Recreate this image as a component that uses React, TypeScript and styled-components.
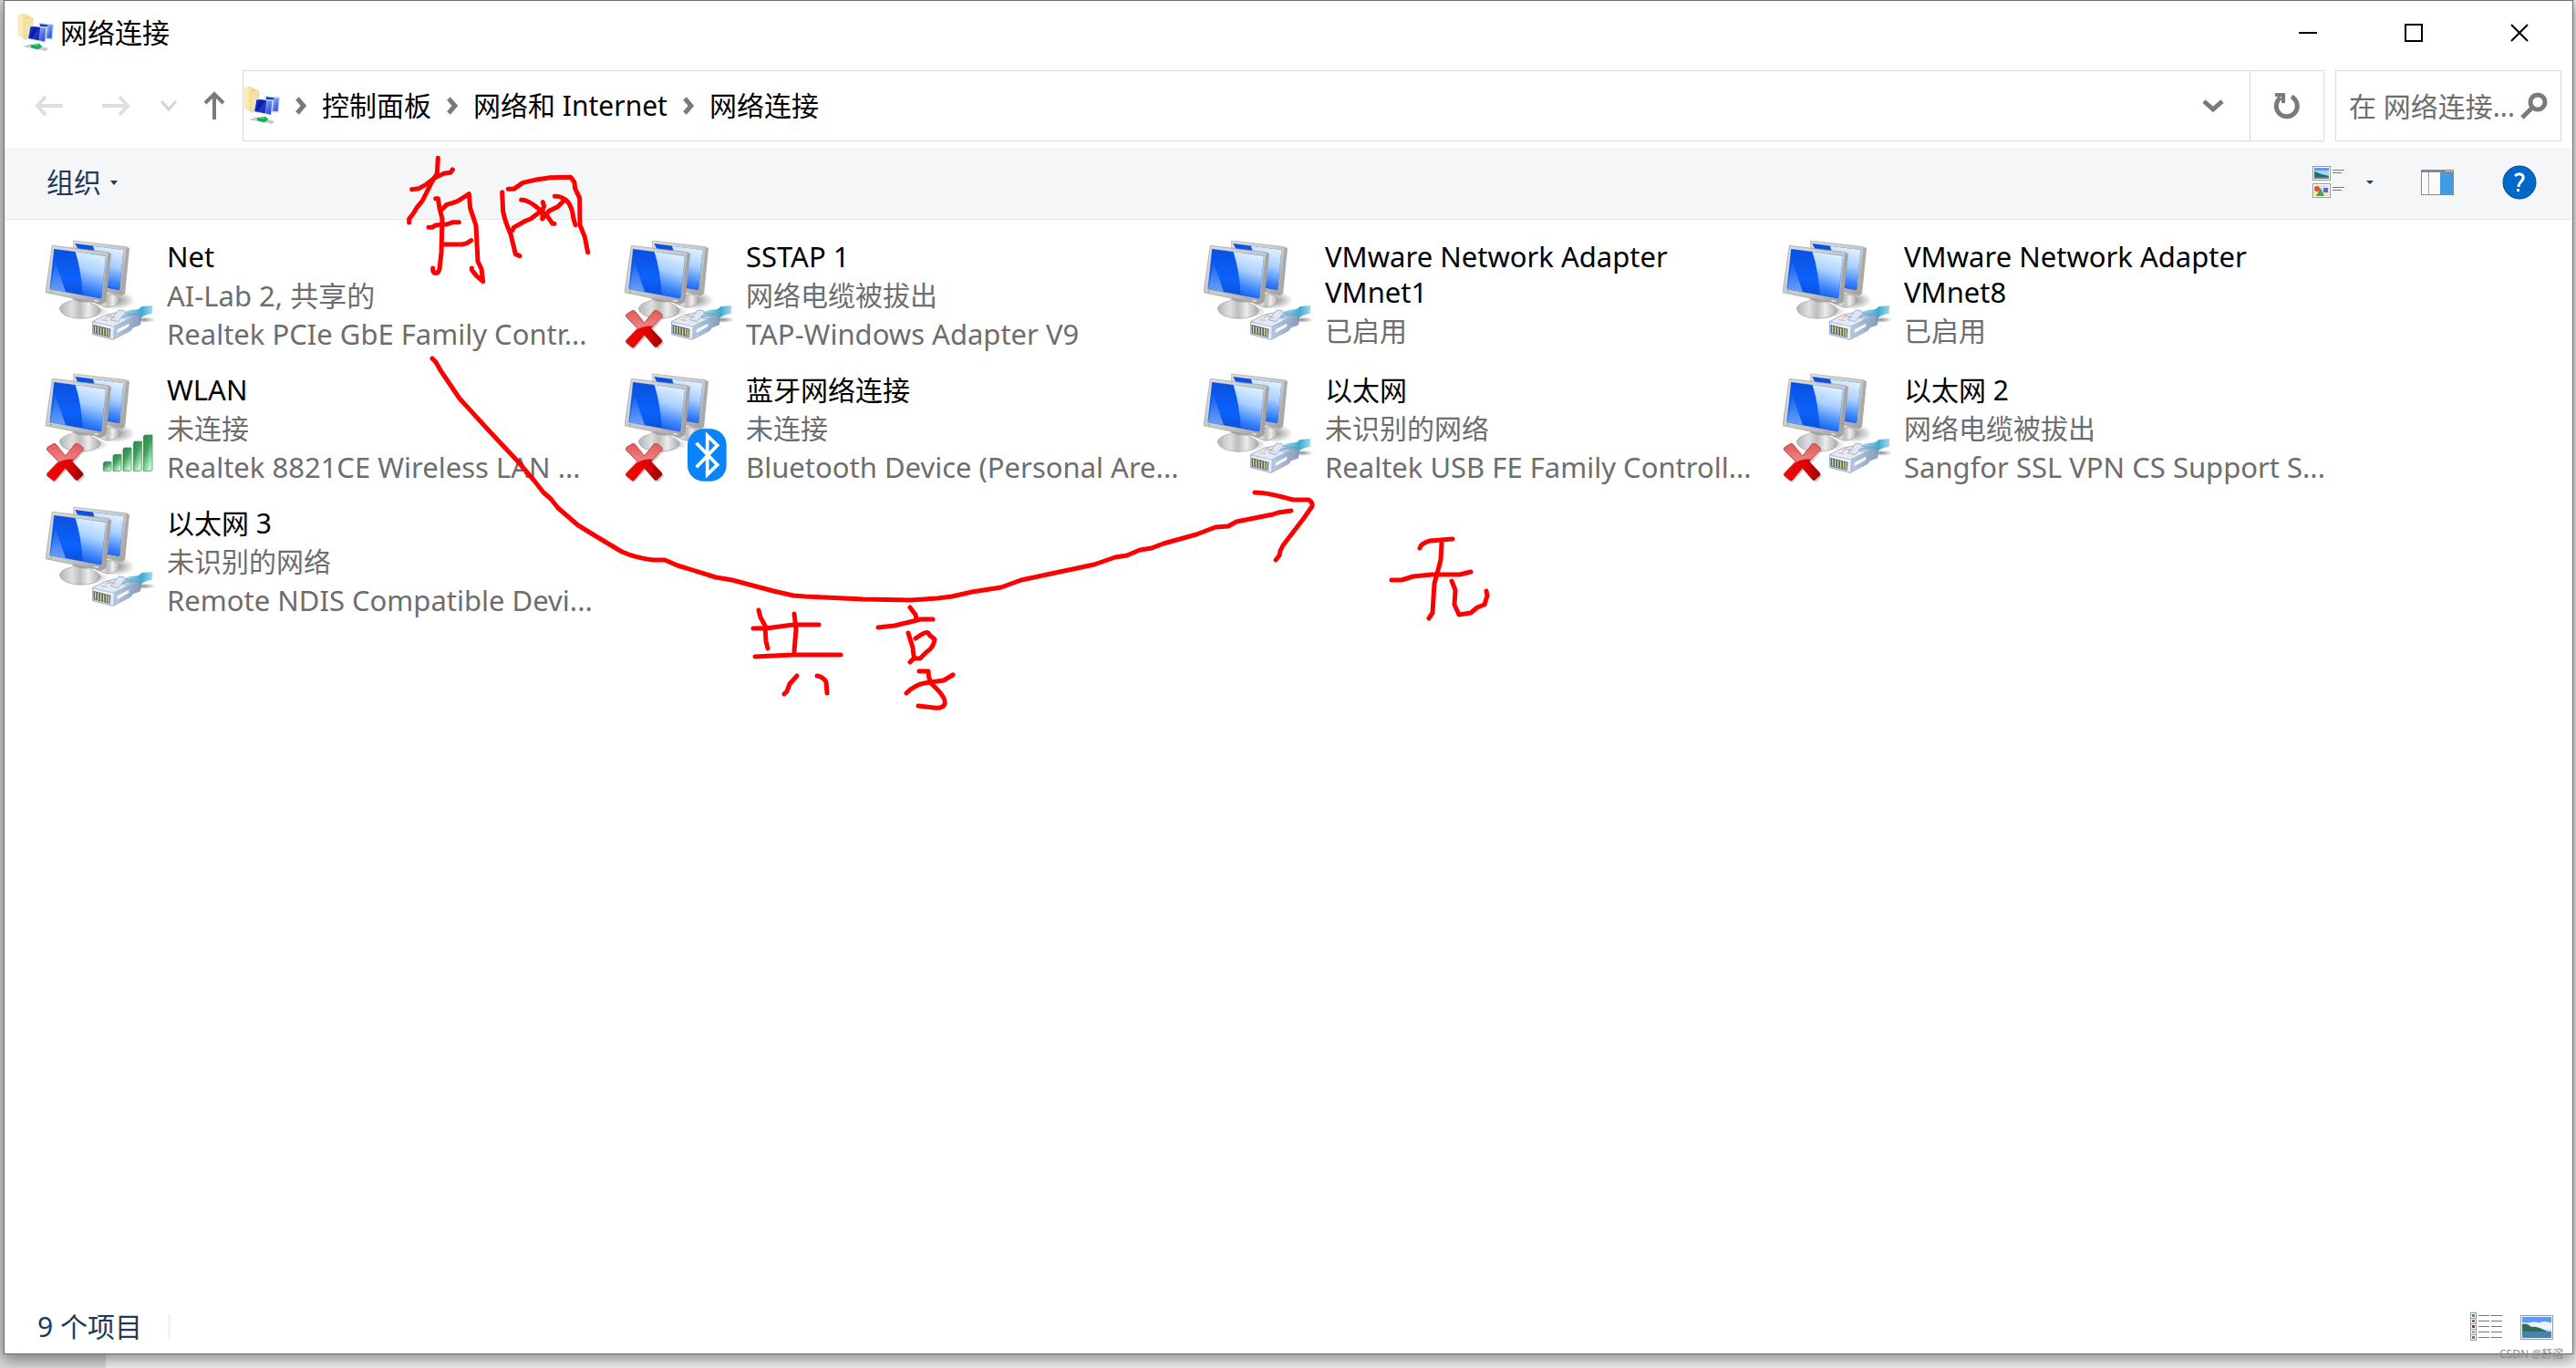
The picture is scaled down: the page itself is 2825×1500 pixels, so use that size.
import React from 'react';
import styled, { createGlobalStyle } from 'styled-components';

const GlobalStyle = createGlobalStyle`
  * { box-sizing: border-box; }
  body {
    margin: 0;
    background: linear-gradient(90deg, #dcdcdc 116px, #f7f7f7 116px);
    font-family: "Noto Sans", "Noto Sans CJK SC", sans-serif;
    font-size: 30px;
    color: #000;
  }
  button, input { font: inherit; color: inherit; border: 0; background: none; padding: 0; margin: 0; }
  h1, h2, p, ul, ol { margin: 0; padding: 0; font-size: inherit; font-weight: 400; list-style: none; }
  svg { display: block; flex: none; }
`;

const Desktop = styled.div`
  position: relative;
  min-height: 100vh;
  padding: 0 3px 15px 4px;
  display: flex;
  overflow: hidden;
`;

const Window = styled.main`
  flex: 1;
  min-width: 0;
  display: flex;
  flex-direction: column;
  background: #fff;
  border: 1px solid #6e6e6e;
  box-shadow: 0 4px 16px 2px rgba(0, 0, 0, 0.45);
`;

const TitleBar = styled.header`
  display: flex;
  align-items: center;
  height: 70px;
  padding-left: 14px;
  gap: 7px;
`;

const Title = styled.h1`
  flex: 1;
  line-height: 40px;
`;

const CaptionButtons = styled.div`
  display: flex;
`;

const CaptionButton = styled.button`
  width: 116px;
  height: 70px;
  display: grid;
  place-items: center;
`;

const AddressRow = styled.div`
  display: flex;
  align-items: center;
  height: 91px;
  padding: 0 12px 1px 0;
`;

const NavButtons = styled.div`
  display: flex;
  width: 261px;
  padding-left: 12px;
`;

const NavButton = styled.button<{ $width: number }>`
  width: ${(p) => p.$width}px;
  height: 40px;
  display: grid;
  place-items: center;
`;

const AddressBox = styled.div`
  flex: 1;
  display: flex;
  height: 78px;
  margin-right: 12px;
  border: 1px solid #d9d9d9;
`;

const Crumbs = styled.nav`
  flex: 1;
  display: flex;
  align-items: center;
  gap: 17px;
`;

const Crumb = styled.a`
  color: inherit;
  text-decoration: none;
  line-height: 40px;
  white-space: nowrap;
`;

const BoxButton = styled.button<{ $divided?: boolean }>`
  width: 81px;
  display: grid;
  place-items: center;
  border-left: ${(p) => (p.$divided ? '1px solid #d9d9d9' : '0')};
`;

const SearchBox = styled.label`
  display: flex;
  align-items: center;
  width: 248px;
  height: 78px;
  padding: 0 14px;
  border: 1px solid #d9d9d9;
`;

const SearchInput = styled.input`
  flex: 1;
  min-width: 0;
  height: 44px;
  outline: 0;
  &::placeholder { color: #6d6d6d; opacity: 1; }
`;

const Toolbar = styled.div`
  display: flex;
  align-items: center;
  height: 79px;
  padding: 0 39px 2px 46px;
  background: #f4f6f8;
  border-bottom: 1px solid #e6e7e8;
  color: #1e395b;
`;

const OrganizeButton = styled.button`
  display: flex;
  align-items: center;
  gap: 10px;
  line-height: 40px;
  margin-right: auto;
`;

const ToolButton = styled.button<{ $gap: number }>`
  display: grid;
  place-items: center;
  margin-left: ${(p) => p.$gap}px;
`;

const Adapters = styled.ul`
  flex: 1;
  display: grid;
  grid-template-columns: repeat(auto-fill, 635px);
  grid-auto-rows: 146px;
  align-content: start;
  padding: 19px 0 0 45px;
`;

const Adapter = styled.li`
  display: flex;
  gap: 13px;
`;

const AdapterText = styled.div`
  flex: 1;
  min-width: 0;
  padding-top: 2px;
`;

const AdapterName = styled.h2<{ $latin: boolean }>`
  font-size: ${(p) => (p.$latin ? 31 : 30)}px;
  line-height: 39px;
  max-width: 440px;
  margin-bottom: 2px;
`;

const AdapterDetail = styled.p<{ $latin: boolean }>`
  font-size: ${(p) => (p.$latin ? 31 : 30)}px;
  line-height: 42px;
  color: #6d6d6d;
  white-space: nowrap;
`;

const StatusBar = styled.footer`
  display: flex;
  align-items: center;
  height: 58px;
  padding: 0 21px 0 36px;
  color: #1e395b;
`;

const ItemCount = styled.span`
  line-height: 40px;
  padding-right: 28px;
`;

const Divider = styled.span`
  width: 3px;
  height: 28px;
  background: #f3f3f3;
  margin-right: auto;
`;

const InkLayer = styled.svg`
  position: absolute;
  top: 0;
  left: 0;
  pointer-events: none;
`;

const Watermark = styled.span`
  position: absolute;
  right: 14px;
  bottom: 7px;
  font-size: 12px;
  line-height: 16px;
  color: #8c8c8c;
`;

const SharedDefs = styled.svg`
  position: absolute;
`;

const FolderNetIcon = () => (
  <svg width="40" height="42" viewBox="12 14 120 126" aria-hidden="true">
    <path d="M16 20 L34 14 L62 30 L62 90 L40 99 L16 82Z" fill="url(#fold)" stroke="#dcc47c" strokeWidth="1.5" />
    <path d="M34 30 L62 26 L62 92 L36 98Z" fill="#f4e2a0" stroke="#e0c878" />
    <path d="M84 46 L130 50 L126 98 L90 94Z" fill="url(#mini)" stroke="#cdd6e6" strokeWidth="4" />
    <path d="M54 54 L108 59 L104 108 L46 96Z" fill="url(#mini)" stroke="#dfe5ee" strokeWidth="4" />
    <path d="M66 57 L88 59 L82 102 L50 95Z" fill="#0713a0" opacity="0.75" />
    <path d="M34 122 L52 115 L112 128 L106 136 L88 132Z" fill="#c3ccd0" stroke="#97a4a8" />
    <path d="M56 117 L84 112 L94 122 L80 132 L58 126Z" fill="#0eb052" />
    <path d="M60 118 L80 115 L84 120Z" fill="#5be294" />
  </svg>
);

const Chevron = () => (
  <svg width="12" height="22" viewBox="0 0 12 22" aria-hidden="true">
    <path d="M2 3 L9 11 L2 19" fill="none" stroke="#7a7a7a" strokeWidth="5" />
  </svg>
);

const Caret = ({ small }: { small?: boolean }) => (
  <svg width="8" height="5" viewBox="0 0 8 5" aria-hidden="true">
    <path d={small ? 'M0 0H8L4 5Z' : 'M0 0H8L4 4Z'} fill="#1e395b" />
  </svg>
);

type Status = 'cable' | 'wifi' | 'bluetooth';

const Gradients = () => (
  <SharedDefs width="0" height="0" aria-hidden="true">
    <defs>
      <linearGradient id="fold" x1="0" x2="1">
        <stop offset="0" stopColor="#fdf3c4" />
        <stop offset="1" stopColor="#e9cd72" />
      </linearGradient>
      <linearGradient id="mini" x1="0" x2="1" y2="0.6">
        <stop offset="0" stopColor="#0a1fa0" />
        <stop offset="0.45" stopColor="#1a3ee0" />
        <stop offset="0.55" stopColor="#86aaf8" />
        <stop offset="1" stopColor="#2c50dc" />
      </linearGradient>
      <linearGradient id="bezel" x1="0" y1="0" x2="1" y2="1">
        <stop offset="0" stopColor="#dedede" />
        <stop offset="0.6" stopColor="#c4c4c4" />
        <stop offset="1" stopColor="#9a9a9a" />
      </linearGradient>
      <linearGradient id="glass" x1="0" y1="0" x2="0" y2="1">
        <stop offset="0" stopColor="#0a50de" />
        <stop offset="0.6" stopColor="#0c62fb" />
        <stop offset="1" stopColor="#0a4cd2" />
      </linearGradient>
      <linearGradient id="sheen" x1="0.5" y1="0" x2="0.3" y2="1">
        <stop offset="0" stopColor="#e2f2ff" />
        <stop offset="0.4" stopColor="#a9d0ff" />
        <stop offset="0.75" stopColor="#3f86fb" />
        <stop offset="1" stopColor="#0a57ee" />
      </linearGradient>
      <linearGradient id="streak" x1="0" y1="0" x2="0" y2="1">
        <stop offset="0" stopColor="#1460ee" />
        <stop offset="1" stopColor="#8ab8fb" />
      </linearGradient>
      <linearGradient id="base" x1="0" x2="1">
        <stop offset="0" stopColor="#b4b4b4" />
        <stop offset="0.3" stopColor="#e0e0e0" />
        <stop offset="0.5" stopColor="#bdbdbd" />
        <stop offset="0.7" stopColor="#ededed" />
        <stop offset="1" stopColor="#a8a8a8" />
      </linearGradient>
      <radialGradient id="shade">
        <stop offset="0" stopColor="#000" stopOpacity="0.45" />
        <stop offset="1" stopColor="#000" stopOpacity="0" />
      </radialGradient>
      <linearGradient id="redTop" x1="0" y1="0" x2="0" y2="1">
        <stop offset="0" stopColor="#e05a5a" />
        <stop offset="1" stopColor="#f28a8a" />
      </linearGradient>
      <linearGradient id="redLow" x1="0" x2="1">
        <stop offset="0" stopColor="#f00808" />
        <stop offset="0.55" stopColor="#e60000" />
        <stop offset="1" stopColor="#930404" />
      </linearGradient>
      <linearGradient id="bar" x1="0" y1="0" x2="0.6" y2="1">
        <stop offset="0" stopColor="#2c8a4c" />
        <stop offset="0.45" stopColor="#3f9c5c" />
        <stop offset="1" stopColor="#c4fbd0" />
      </linearGradient>
      <linearGradient id="cord" x1="0" x2="1">
        <stop offset="0" stopColor="#a6dff0" />
        <stop offset="0.6" stopColor="#3fa9cf" />
        <stop offset="1" stopColor="#9fdcef" />
      </linearGradient>
      <linearGradient id="jack" x1="0" x2="1">
        <stop offset="0" stopColor="#c4d2e6" />
        <stop offset="0.5" stopColor="#eef4fb" />
        <stop offset="1" stopColor="#7f93b4" />
      </linearGradient>
    </defs>
  </SharedDefs>
);

const CablePlug = () => (
  <g>
    <ellipse cx="352" cy="290" rx="40" ry="10" fill="url(#shade)" />
    <path d="M290 264 C320 252 336 262 346 246 L382 243 L380 270 C360 270 350 282 325 290Z" fill="url(#cord)" />
    <path d="M185 296 L228 274 L276 264 L336 274 L343 282 L341 306 L316 315 L310 325 L252 355 L185 338Z" fill="url(#jack)" stroke="#6d84a8" strokeWidth="2" />
    <path d="M185 296 L228 274 L302 288 L254 312Z" fill="#e2ebf6" stroke="#a2b2ca" strokeWidth="2" />
    <path d="M254 312 L302 288 L338 278 L340 305 L316 313 L310 323 L252 353Z" fill="#8ea4c8" opacity="0.6" />
    <path d="M266 322 L304 302 L304 312 L266 334Z" fill="#f4f8fd" />
    <path d="M244 290 L270 258 L288 260 L293 268 L268 296Z" fill="#dde6f2" stroke="#8095b6" strokeWidth="2" />
    <path d="M226 284 L240 278 L260 283 M214 290 L234 292" stroke="#e7a58c" strokeWidth="3" fill="none" />
    <path d="M282 282 L300 274 L322 278" stroke="#6fb8dc" strokeWidth="5" fill="none" />
    <path d="M188 306 L244 320 L242 348 L188 334Z" fill="#52627c" />
    <path d="M194 310V333 M203 312V336 M212 314V338 M221 317V341 M230 319V343 M238 321V345" stroke="#e2dc74" strokeWidth="4" />
    <path d="M186 302 L252 318" stroke="#f5f9ff" strokeWidth="4" />
  </g>
);

const SignalBars = () => (
  <g fill="url(#bar)" stroke="#2c7a48" strokeWidth="2">
    {[[220, 319, 26], [252, 295, 27], [285, 273, 27], [319, 252, 27], [352, 231, 29]].map(([x, y, w]) => (
      <path key={x} d={`M${x} ${y + 4} L${x + 5} ${y} H${x + w} V346 L${x + w - 4} 349 H${x}Z`} />
    ))}
  </g>
);

const BluetoothMark = () => (
  <g transform="translate(-17 9)">
    <rect x="254" y="202" width="128" height="172" rx="52" fill="#0a84fb" />
    <path d="M283 248 L352 320 L319 352 V224 L352 256 L283 328" fill="none" stroke="#fff" strokeWidth="11" />
  </g>
);

const RedCross = () => (
  <g>
    <path d="M58 262 L97 306 L133 260 L156 278 L119 320 L156 362 L136 384 L97 342 L56 384 L35 364 L74 320 L34 280Z" fill="#777" opacity="0.35" transform="translate(4 4)" />
    <path d="M56 260 Q62 258 66 264 L95 300 L126 262 Q132 256 138 261 L152 271 Q156 276 151 281 L117 318 L151 354 Q156 360 151 365 L136 379 Q131 382 127 377 L95 340 L62 379 Q57 384 52 379 L36 366 Q32 361 36 356 L73 318 L36 281 Q32 276 37 271Z" fill="url(#redLow)" stroke="#b82020" strokeWidth="2" />
    <path d="M56 260 Q62 258 66 264 L95 300 L126 262 Q132 256 138 261 L152 271 Q156 276 151 281 L123 311 Q90 308 65 326 L73 318 L36 281 Q32 276 37 271Z" fill="url(#redTop)" stroke="#d04848" strokeWidth="2" />
  </g>
);

const AdapterIcon = ({ status, off }: { status: Status; off?: boolean }) => (
  <svg width="120" height="130" viewBox="30 18 360 390" aria-hidden="true">
    <ellipse cx="262" cy="226" rx="62" ry="30" fill="url(#shade)" />
    <path d="M196 236 Q206 214 236 206 Q270 206 274 222 Q270 246 232 250Z" fill="url(#base)" stroke="#a0a0a0" strokeWidth="2" />
    <path d="M122 30 L296 50 L305 55 L290 204 L280 210 L220 196 L122 190Z" fill="url(#bezel)" stroke="#a4a4a4" strokeWidth="2" />
    <path d="M296 52 L304 56 L290 204 L280 209Z" fill="#a9a9a9" />
    <path d="M127 39 L286 60 L273 192 L200 180Z" fill="url(#glass)" />
    <path d="M186 47 L286 60 L273 192 L228 183Z" fill="url(#sheen)" />
    <ellipse cx="165" cy="262" rx="72" ry="22" fill="url(#shade)" />
    <path d="M76 252 Q82 234 116 228 L128 214 L176 220 L180 236 Q206 244 211 258 Q206 284 144 286 Q80 282 76 252Z" fill="url(#base)" stroke="#9c9c9c" strokeWidth="2" />
    <path d="M120 222 Q146 238 182 230 L178 222 L128 212Z" fill="#8e8e8e" opacity="0.6" />
    <path d="M52 46 L236 68 L245 73 L228 230 L214 238 L30 200Z" fill="url(#bezel)" stroke="#999" strokeWidth="2" />
    <path d="M236 70 L244 74 L227 229 L214 237Z" fill="#a3a3a3" />
    <path d="M57 56 L229 79 L214 221 L43 190Z" fill="url(#glass)" stroke="#dbe8f6" strokeWidth="1" />
    <path d="M128 66 L228 80 L213 220 L152 208 Q148 130 128 66Z" fill="url(#sheen)" />
    <path d="M62 98 L96 198 L45 189Z" fill="url(#streak)" opacity="0.75" />
    <circle cx="48" cy="197" r="3" fill="#58e03c" />
    <path d="M190 226 L204 229" stroke="#eee" strokeWidth="4" />
    {status === 'cable' && <CablePlug />}
    {status === 'wifi' && <SignalBars />}
    {status === 'bluetooth' && <BluetoothMark />}
    {off && <RedCross />}
  </svg>
);

const adapters: { name: string; details: string[]; status: Status; off?: boolean }[] = [
  { name: 'Net', details: ['AI-Lab 2, 共享的', 'Realtek PCIe GbE Family Contr...'], status: 'cable' },
  { name: 'SSTAP 1', details: ['网络电缆被拔出', 'TAP-Windows Adapter V9'], status: 'cable', off: true },
  { name: 'VMware Network Adapter VMnet1', details: ['已启用'], status: 'cable' },
  { name: 'VMware Network Adapter VMnet8', details: ['已启用'], status: 'cable' },
  { name: 'WLAN', details: ['未连接', 'Realtek 8821CE Wireless LAN ...'], status: 'wifi', off: true },
  { name: '蓝牙网络连接', details: ['未连接', 'Bluetooth Device (Personal Are...'], status: 'bluetooth', off: true },
  { name: '以太网', details: ['未识别的网络', 'Realtek USB FE Family Controll...'], status: 'cable' },
  { name: '以太网 2', details: ['网络电缆被拔出', 'Sangfor SSL VPN CS Support S...'], status: 'cable', off: true },
  { name: '以太网 3', details: ['未识别的网络', 'Remote NDIS Compatible Devi...'], status: 'cable' },
];

const isLatin = (text: string) => /[A-Za-z]/.test(text);

const Ink = () => (
  <InkLayer width="1700" height="800" viewBox="0 0 1700 800" fill="none" stroke="#fe0000" strokeWidth="5" strokeLinecap="round" strokeLinejoin="round" aria-hidden="true">
    <g transform="translate(400 160) scale(.33333)" strokeWidth="15">
      <path d="M241 40 L238 90 L220 120 L190 180 L172 202 L160 222 L146 240 V252" />
      <path d="M155 143 L178 140 L200 128 L230 105 L262 90 L282 88 L289 78" />
      <path d="M233 173 H241 L246 205 L255 240 L252 350 L246 405 Q242 420 230 418 Q223 414 224 402" />
      <path d="M255 208 L270 193 L290 187 L305 182 L343 158 L347 205 L366 262 L372 380 L384 405 L389 446 L368 428 L352 408 V402" />
      <path d="M210 268 H222 L232 261 L270 258 L290 251 H310" />
      <path d="M262 324 H322 L336 320 L350 311" />
      <path d="M452 152 L455 215 Q462 250 480 290 L496 356 L510 362" />
      <path d="M472 142 H490 L520 121 L560 112 L610 104 L678 103 L690 120 L692 140 L707 172 L708 260 L724 300 L734 350" />
      <path d="M515 178 Q535 176 570 205 L600 230 L618 256 H624" />
      <path d="M486 278 L490 268 L530 246 L546 240 L585 210 L590 198 L586 185 M585 210 V238" />
      <path d="M625 166 Q648 164 668 184 Q684 206 686 236 L693 260 M655 180 L635 200 L606 214 L584 240" />
    </g>
    <path d="M474 393 L478 397 L483 406 L504 437 L536 472 L567 505 L585 526 L596 540 L604 547 L612 557 L634 576 Q660 592 682 605 Q698 612 716 614 H729 L743 620 L785 633 L803 636 L848 648 L870 653 L883 654 L946 657 L999 658 L1028 656 L1044 654 L1066 649 L1098 644 L1120 636 L1200 619 L1223 611 L1236 609 L1250 603 L1263 601 L1276 596 L1312 586 L1333 578 L1347 577 L1356 572 L1396 564 L1402 562 L1416 560" />
    <path d="M1376 540 Q1390 540 1418 548 H1435 Q1440 551 1439 555 L1430 568 L1407 598 L1404 604 L1403 609 L1399 614" />
    <path d="M1557 601 Q1558 596 1568 593 L1593 591 M1581 596 L1580 614 L1573 640 L1571 672 L1567 678" />
    <path d="M1526 636 H1537 L1550 632 L1570 630 H1601 L1613 627 M1592 637 L1596 647 L1595 663 L1600 674 L1613 672 L1620 666 L1628 663 L1631 653 L1630 648" />
    <path d="M832 669 L834 677 L839 686 L840 703 L842 711 M871 673 L873 690 L871 714 M826 689 H840 L870 685 H898 M828 720 L870 718 H922 M874 741 L866 750 L863 758 L860 761 M896 741 Q903 742 906 748 L907 760" />
    <path d="M998 666 L1004 674 L1005 679 M963 688 L981 686 L1002 681 L1010 679 H1023 M996 694 L1001 710 L1002 719 M1004 700 L1010 696 Q1018 691 1019 696 L1025 701 Q1024 710 1016 715 L1009 722 H1002 L998 726" />
    <path d="M1008 736 H1018 Q1018 748 1026 754 Q1038 766 1036 772 Q1034 777 1024 776 L1007 774 M994 760 Q1003 751 1014 749 L1035 746 L1045 740" />
  </InkLayer>
);

export default function App() {
  return (
    <Desktop>
      <GlobalStyle />
      <Gradients />
      <Window>
        <TitleBar>
          <FolderNetIcon />
          <Title>网络连接</Title>
          <CaptionButtons>
            <CaptionButton aria-label="最小化">
              <svg width="20" height="20" viewBox="0 0 20 20"><path d="M0 10H20" stroke="#000" strokeWidth="2" /></svg>
            </CaptionButton>
            <CaptionButton aria-label="最大化">
              <svg width="20" height="20" viewBox="0 0 20 20"><rect x="1" y="1" width="18" height="18" fill="none" stroke="#000" strokeWidth="2" /></svg>
            </CaptionButton>
            <CaptionButton aria-label="关闭">
              <svg width="20" height="20" viewBox="0 0 20 20"><path d="M1 1L19 19M19 1L1 19" stroke="#000" strokeWidth="2" /></svg>
            </CaptionButton>
          </CaptionButtons>
        </TitleBar>

        <AddressRow>
          <NavButtons>
            <NavButton $width={73} aria-label="后退">
              <svg width="32" height="24" viewBox="0 0 32 24"><path d="M12 2L3 12L12 22M3 12H31" fill="none" stroke="#dedede" strokeWidth="4" /></svg>
            </NavButton>
            <NavButton $width={73} aria-label="前进">
              <svg width="32" height="24" viewBox="0 0 32 24"><path d="M20 2L29 12L20 22M29 12H1" fill="none" stroke="#dedede" strokeWidth="4" /></svg>
            </NavButton>
            <NavButton $width={43} aria-label="最近浏览的位置">
              <svg width="20" height="14" viewBox="0 0 20 14"><path d="M2 2L10 11L18 2" fill="none" stroke="#d4d4d4" strokeWidth="3" /></svg>
            </NavButton>
            <NavButton $width={58} aria-label="上移">
              <svg width="24" height="32" viewBox="0 0 24 32"><path d="M2 13L12 3L22 13M12 3V31" fill="none" stroke="#7a7a7a" strokeWidth="4" /></svg>
            </NavButton>
          </NavButtons>
          <AddressBox>
            <Crumbs aria-label="地址">
              <FolderNetIcon />
              <Chevron />
              <Crumb href="#panel">控制面板</Crumb>
              <Chevron />
              <Crumb href="#network">网络和 Internet</Crumb>
              <Chevron />
              <Crumb href="#connections">网络连接</Crumb>
            </Crumbs>
            <BoxButton aria-label="展开地址栏">
              <svg width="24" height="16" viewBox="0 0 24 16"><path d="M2 3L12 12L22 3" fill="none" stroke="#7a7a7a" strokeWidth="5" /></svg>
            </BoxButton>
            <BoxButton $divided aria-label="刷新">
              <svg width="30" height="30" viewBox="0 0 30 30">
                <path d="M20 5A11.500 11.500 0 1 1 8 6" fill="none" stroke="#7a7a7a" strokeWidth="5" />
                <path d="M2 1H13V12H9V5H2Z" fill="#7a7a7a" />
              </svg>
            </BoxButton>
          </AddressBox>
          <SearchBox>
            <SearchInput type="text" aria-label="搜索" placeholder="在 网络连接..." />
            <svg width="30" height="30" viewBox="0 0 30 30" aria-hidden="true">
              <circle cx="19" cy="11" r="8" fill="none" stroke="#7a7a7a" strokeWidth="5" />
              <path d="M13 17L2 28" stroke="#7a7a7a" strokeWidth="5" />
            </svg>
          </SearchBox>
        </AddressRow>

        <Toolbar>
          <OrganizeButton>组织<Caret small /></OrganizeButton>
          <ToolButton $gap={0} aria-label="更改视图">
            <svg width="36" height="36" viewBox="0 0 36 36">
              <rect x="0.500" y="0.500" width="19" height="15" fill="#fff" stroke="#9a9a9a" />
              <rect x="2" y="2" width="16" height="12" fill="#a9d3fa" />
              <rect x="2" y="2" width="16" height="3" fill="#5e9cf4" />
              <path d="M2 6L10 9L18 11V12H2Z" fill="#2d6b55" />
              <rect x="2" y="12" width="16" height="2" fill="#4c83a4" />
              <rect x="0.500" y="19.500" width="19" height="15" fill="#fff" stroke="#9a9a9a" />
              <rect x="2" y="21" width="16" height="12" fill="#cfe8fb" />
              <rect x="2" y="28" width="16" height="5" fill="#f3e79a" />
              <circle cx="5" cy="25" r="3" fill="#e0532a" />
              <path d="M4 33L9 24L13 33Z" fill="#53a052" />
              <rect x="12" y="24" width="5" height="5" fill="#6b62cc" />
              <path d="M22 4.500H35M22 7.500H32M22 23.500H35M22 26.500H32" stroke="#777" />
            </svg>
          </ToolButton>
          <ToolButton $gap={23} aria-label="更多视图选项"><Caret /></ToolButton>
          <ToolButton $gap={52} aria-label="显示预览窗格">
            <svg width="36" height="28" viewBox="0 0 36 28">
              <rect x="0.500" y="0.500" width="35" height="27" fill="#fafafa" stroke="#868a8e" />
              <rect width="36" height="3" fill="#868a8e" />
              <path d="M8.500 3V27" stroke="#a5a5a5" />
              <rect x="21" y="3" width="14" height="24" fill="#419ce4" />
              <path d="M27 1.500H29M30 1.500H32M33 1.500H35" stroke="#eee" />
            </svg>
          </ToolButton>
          <ToolButton $gap={53} aria-label="获取帮助">
            <svg width="38" height="38" viewBox="0 0 38 38">
              <circle cx="19" cy="19" r="18" fill="#0068c9" stroke="#0b4a86" strokeWidth="1" />
              <path d="M14 12Q17 9 20 10Q24 11 23 15Q22 17 20 19Q18 21 18 24" fill="none" stroke="#fff" strokeWidth="3" />
              <rect x="16" y="26" width="3" height="3" fill="#fff" />
            </svg>
          </ToolButton>
        </Toolbar>

        <Adapters>
          {adapters.map((a) => (
            <Adapter key={a.name}>
              <AdapterIcon status={a.status} off={a.off} />
              <AdapterText>
                <AdapterName $latin={isLatin(a.name)}>{a.name}</AdapterName>
                {a.details.map((d) => <AdapterDetail key={d} $latin={isLatin(d)}>{d}</AdapterDetail>)}
              </AdapterText>
            </Adapter>
          ))}
        </Adapters>

        <StatusBar>
          <ItemCount>9 个项目</ItemCount>
          <Divider />
          <ToolButton $gap={0} aria-label="详细信息">
            <svg width="35" height="32" viewBox="0 0 35 32">
              {['#3f86a8', '#6f7f2c', '#c81c1c', '#c99a50', '#3f86a8'].map((c, i) => (
                <g key={i}>
                  <rect x="0.500" y={0.5 + i * 6} width="6" height="6" fill="#fff" stroke="#9a9a9a" />
                  <rect x="2" y={2 + i * 6} width="3" height="3" fill={c} />
                  <path d={`M9 ${3.5 + i * 6}H21M23 ${3.5 + i * 6}H35`} stroke="#777" />
                </g>
              ))}
            </svg>
          </ToolButton>
          <ToolButton $gap={20} aria-label="大图标">
            <svg width="36" height="27" viewBox="0 0 36 27">
              <rect x="0.500" y="0.500" width="35" height="26" fill="#fff" stroke="#9a9a9a" />
              <rect x="2" y="2" width="32" height="23" fill="#b9dcfb" />
              <rect x="2" y="2" width="32" height="6" fill="#5c9bf5" />
              <path d="M8 10Q14 5 20 9Q26 5 34 9V16H8Z" fill="#eaf5fe" />
              <path d="M2 10Q8 9 12 13Q18 12 30 18H2Z" fill="#2f6d58" />
              <path d="M2 18H34V25H2Z" fill="#4a82ab" />
            </svg>
          </ToolButton>
        </StatusBar>
      </Window>
      <Ink />
      <Watermark>CSDN @舒溶</Watermark>
    </Desktop>
  );
}
